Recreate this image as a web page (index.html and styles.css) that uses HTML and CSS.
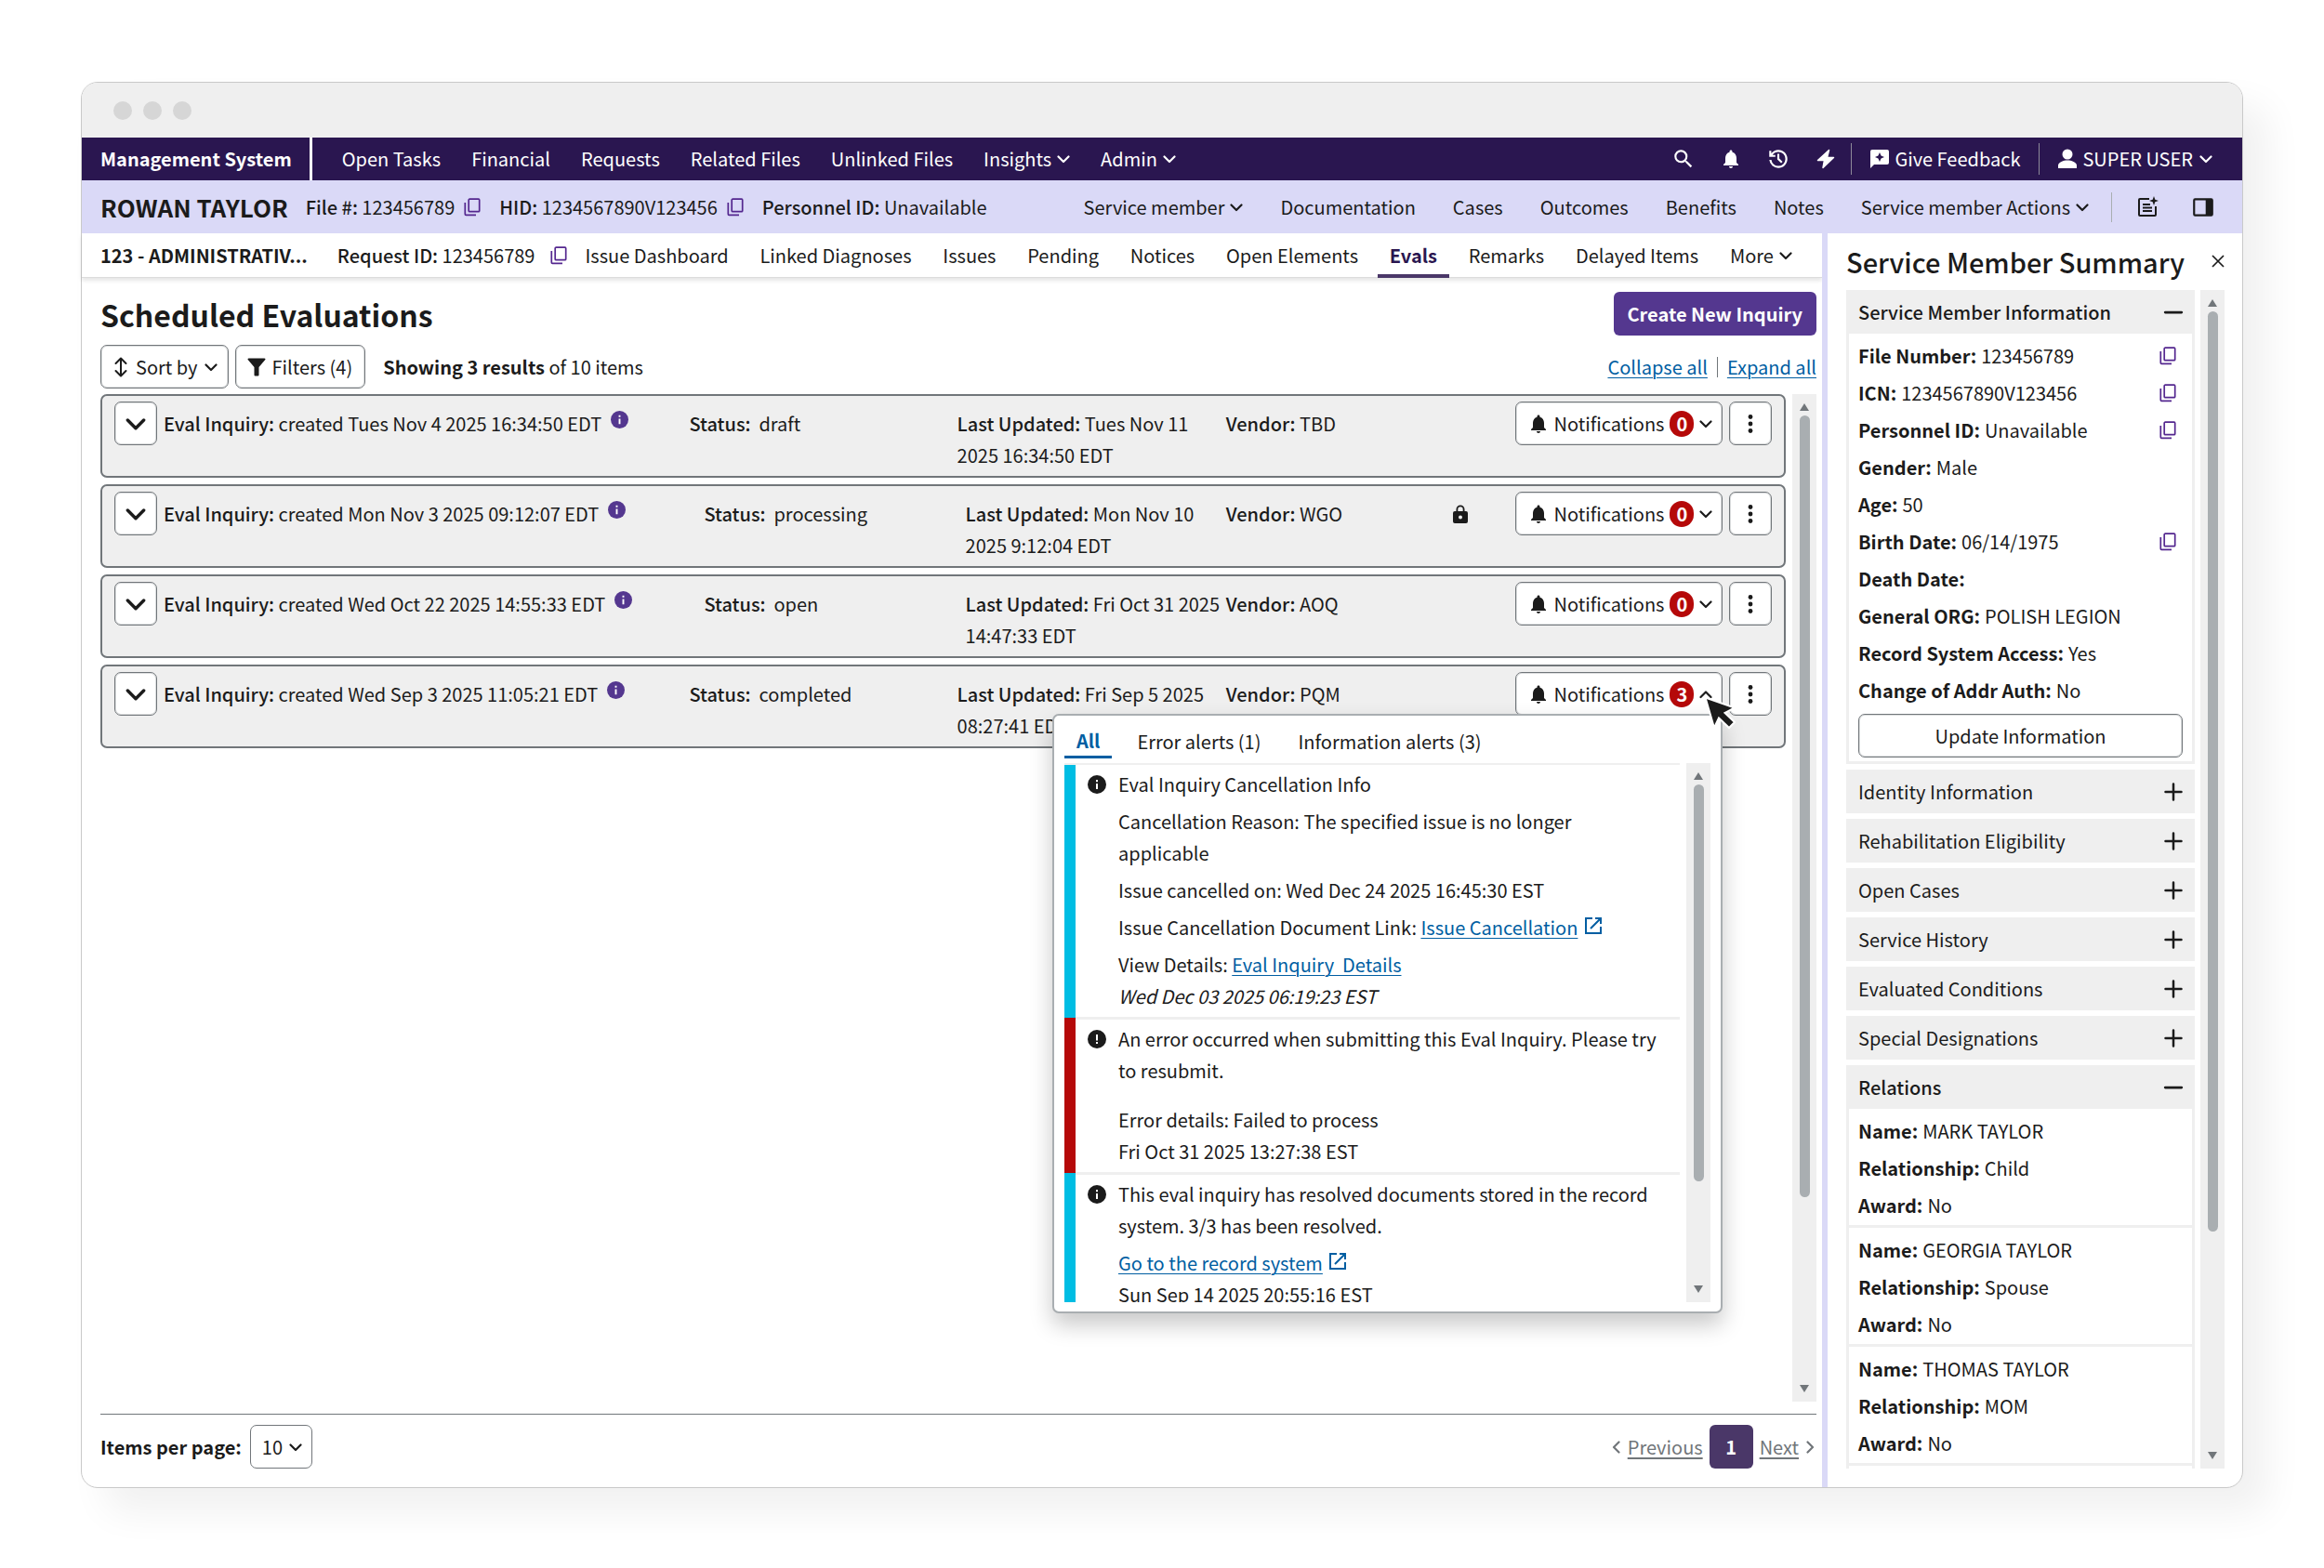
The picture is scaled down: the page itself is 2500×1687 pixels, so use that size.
FILE: index.html
```html
<!DOCTYPE html>
<html lang="en">
<head>
<meta charset="utf-8">
<title>Management System</title>
<link rel="stylesheet" href="styles.css">
</head>
<body>
<svg class="sprite" aria-hidden="true">
  <symbol id="chevron" viewBox="0 0 14 14"><path d="M1.500 4.500 7 10l5.500-5.500" fill="none" stroke="currentColor" stroke-width="2.200" stroke-linecap="round" stroke-linejoin="round"/></symbol>
  <symbol id="chevron-up" viewBox="0 0 14 14"><path d="M1.500 10 7 4.500l5.500 5.500" fill="none" stroke="currentColor" stroke-width="2.200" stroke-linecap="round" stroke-linejoin="round"/></symbol>
  <symbol id="search" viewBox="0 0 24 24"><path fill="currentColor" d="M15.500 14h-.79l-.28-.27A6.471 6.471 0 0 0 16 9.500 6.500 6.500 0 1 0 9.500 16c1.610 0 3.090-.59 4.230-1.570l.27.28v.79l5 4.990L20.490 19l-4.990-5zm-6 0C7.010 14 5 11.990 5 9.500S7.010 5 9.500 5 14 7.010 14 9.500 11.990 14 9.500 14z"/></symbol>
  <symbol id="bell" viewBox="0 0 24 24"><path fill="currentColor" d="M12 22c1.100 0 2-.9 2-2h-4c0 1.100.89 2 2 2zm6-6v-5c0-3.070-1.640-5.640-4.500-6.320V4c0-.83-.67-1.500-1.500-1.500s-1.500.67-1.500 1.500v.68C7.630 5.360 6 7.920 6 11v5l-2 2v1h16v-1l-2-2z"/></symbol>
  <symbol id="history" viewBox="0 -960 960 960"><path fill="currentColor" d="M480-120q-138 0-240.500-91.500T122-440h82q14 104 92.500 172T480-200q117 0 198.500-81.500T760-480q0-117-81.500-198.500T480-760q-69 0-129 32t-101 88h110v80H120v-240h80v94q51-64 124.500-99T480-840q75 0 140.500 28.500t114 77q48.500 48.500 77 114T840-480q0 75-28.500 140.500t-77 114q-48.500 48.500-114 77T480-120Zm112-192L440-464v-216h80v184l128 128-56 56Z"/></symbol>
  <symbol id="bolt" viewBox="0 0 24 24"><path fill="currentColor" stroke="currentColor" stroke-width="1.500" stroke-linejoin="round" d="M15.500 2.500 3.500 13.500h7L9 21.500 20.500 10.500H13.500z"/></symbol>
  <symbol id="feedback" viewBox="0 0 24 24"><path fill="currentColor" fill-rule="evenodd" d="M20 2H4a2 2 0 0 0-2 2v18l4-4h14a2 2 0 0 0 2-2V4a2 2 0 0 0-2-2zm-6.430 9.570L12 15l-1.570-3.430L7 10l3.430-1.570L12 5l1.570 3.430L17 10z"/></symbol>
  <symbol id="user" viewBox="0 0 24 24"><circle cx="12" cy="7" r="5.500" fill="currentColor"/><path fill="currentColor" d="M2 19c0-3.500 6-5.500 10-5.500s10 2 10 5.500v3H2z"/></symbol>
  <symbol id="copy" viewBox="0 0 20 20"><g fill="none" stroke="currentColor" stroke-width="1.700" stroke-linejoin="round"><rect x="6.200" y="1.200" width="11.500" height="13.500" rx="1"/><path d="M2.300 5v12.300a1 1 0 0 0 1 1H14"/></g></symbol>
  <symbol id="note" viewBox="0 0 24 24"><path fill="none" stroke="currentColor" stroke-width="2" stroke-linejoin="round" d="M14 3H4a1 1 0 0 0-1 1v16a1 1 0 0 0 1 1h16a1 1 0 0 0 1-1v-9"/><path fill="none" stroke="currentColor" stroke-width="1.800" d="M7 9h8M7 12.500h10M7 16h10"/><path fill="currentColor" d="m19 0 1.300 3.700L24 5l-3.700 1.300L19 10l-1.300-3.700L14 5l3.700-1.300z"/></symbol>
  <symbol id="panel" viewBox="0 0 24 24"><rect x="3" y="4" width="18" height="16" rx="1" fill="none" stroke="currentColor" stroke-width="2"/><path fill="currentColor" d="M14.500 4H21v16h-6.500z"/></symbol>
  <symbol id="sort" viewBox="0 0 24 24"><path fill="none" stroke="currentColor" stroke-width="2" stroke-linecap="round" stroke-linejoin="round" d="M12 3v18M6.500 8 12 2.500 17.500 8M6.500 16l5.500 5.500 5.500-5.500"/></symbol>
  <symbol id="funnel" viewBox="0 0 20 20"><path fill="currentColor" d="M1.500.5h17a1 1 0 0 1 .8 1.600L12.500 10v8.500a1 1 0 0 1-1 1h-3a1 1 0 0 1-1-1V10L.7 2.100A1 1 0 0 1 1.500.5z"/></symbol>
  <symbol id="info" viewBox="0 0 20 20"><circle cx="10" cy="10" r="10" fill="currentColor"/><path fill="#fff" d="M9 9h2v6H9zM9 5h2v2.200H9z"/></symbol>
  <symbol id="alert" viewBox="0 0 20 20"><circle cx="10" cy="10" r="10" fill="currentColor"/><path fill="#fff" d="M9 5h2v6.500H9zM9 13h2v2H9z"/></symbol>
  <symbol id="dots" viewBox="0 0 20 20"><g fill="currentColor"><circle cx="10" cy="2.500" r="2.400"/><circle cx="10" cy="10" r="2.400"/><circle cx="10" cy="17.500" r="2.400"/></g></symbol>
  <symbol id="lock" viewBox="0 0 16 20"><path fill="currentColor" fill-rule="evenodd" d="M2 7h1.500V5a4.500 4.500 0 0 1 9 0v2H14a2 2 0 0 1 2 2v9a2 2 0 0 1-2 2H2a2 2 0 0 1-2-2V9a2 2 0 0 1 2-2zm3.300 0h5.400V5a2.700 2.700 0 0 0-5.400 0zM8 11.500a2 2 0 1 0 0 4 2 2 0 0 0 0-4z"/></symbol>
  <symbol id="external" viewBox="0 0 20 20"><path fill="none" stroke="currentColor" stroke-width="2" d="M9 2H2v16h16v-7M12 2h6v6M18 2 7 13"/></symbol>
  <symbol id="close" viewBox="0 0 14 14"><path stroke="currentColor" stroke-width="1.700" d="m1 1 12 12M13 1 1 13"/></symbol>
  <symbol id="minus" viewBox="0 0 20 20"><path stroke="currentColor" stroke-width="2.500" stroke-linecap="round" d="M2 10h16"/></symbol>
  <symbol id="plus" viewBox="0 0 20 20"><path stroke="currentColor" stroke-width="2.500" stroke-linecap="round" d="M1.500 10h17M10 1.500v17"/></symbol>
  <symbol id="cursor" viewBox="0 0 34 36"><path fill="#1b1b1b" stroke="#fff" stroke-width="2" stroke-linejoin="miter" d="M1.500 1.500 33 12.500 22.500 18 33 28l-6 6L16 23.500 11 34z"/></symbol>
</svg>

<div class="window">
  <div class="titlebar"><span class="dot"></span><span class="dot"></span><span class="dot"></span></div>

  <header class="topbar">
    <strong class="brand">Management System</strong>
    <nav class="topnav">
      <a href="#">Open Tasks</a><a href="#">Financial</a><a href="#">Requests</a><a href="#">Related Files</a><a href="#">Unlinked Files</a>
      <a href="#">Insights<svg class="chev"><use href="#chevron"/></svg></a>
      <a href="#">Admin<svg class="chev"><use href="#chevron"/></svg></a>
    </nav>
    <div class="tools">
      <button class="bare" aria-label="Search"><svg class="i26"><use href="#search"/></svg></button>
      <button class="bare" aria-label="Alerts"><svg class="i24"><use href="#bell"/></svg></button>
      <button class="bare" aria-label="History"><svg class="i26"><use href="#history"/></svg></button>
      <button class="bare" aria-label="Quick actions"><svg class="i24"><use href="#bolt"/></svg></button>
    </div>
    <a class="feedback" href="#"><svg class="i24"><use href="#feedback"/></svg>Give Feedback</a>
    <a class="account" href="#"><svg class="i24"><use href="#user"/></svg>SUPER USER<svg class="chev"><use href="#chevron"/></svg></a>
  </header>

  <div class="memberbar">
    <h2 class="member">ROWAN TAYLOR</h2>
    <div class="ids">
      <span><b>File #:</b> 123456789</span><button class="bare copy" aria-label="Copy file number"><svg class="i20"><use href="#copy"/></svg></button>
      <span><b>HID:</b> 1234567890V123456</span><button class="bare copy" aria-label="Copy HID"><svg class="i20"><use href="#copy"/></svg></button>
      <span><b>Personnel ID:</b> Unavailable</span>
    </div>
    <nav class="membernav">
      <a href="#">Service member<svg class="chev"><use href="#chevron"/></svg></a><a href="#">Documentation</a><a href="#">Cases</a><a href="#">Outcomes</a><a href="#">Benefits</a><a href="#">Notes</a>
      <a href="#">Service member Actions<svg class="chev"><use href="#chevron"/></svg></a>
    </nav>
    <div class="membertools">
      <button class="bare" aria-label="Add note"><svg class="i24"><use href="#note"/></svg></button>
      <button class="bare" aria-label="Toggle panel"><svg class="i26"><use href="#panel"/></svg></button>
    </div>
  </div>

  <div class="body">
    <main class="main">
      <div class="tabs">
        <strong class="case">123 - ADMINISTRATIV...</strong>
        <span class="request"><span><b>Request ID:</b> 123456789</span><button class="bare copy" aria-label="Copy request ID"><svg class="i20"><use href="#copy"/></svg></button></span>
        <nav class="tabnav">
          <a href="#">Issue Dashboard</a><a href="#">Linked Diagnoses</a><a href="#">Issues</a><a href="#">Pending</a><a href="#">Notices</a><a href="#">Open Elements</a><a class="current" href="#">Evals</a><a href="#">Remarks</a><a href="#">Delayed Items</a><a href="#">More<svg class="chev"><use href="#chevron"/></svg></a>
        </nav>
      </div>

      <div class="content">
        <div class="heading">
          <h1>Scheduled Evaluations</h1>
          <button class="primary">Create New Inquiry</button>
        </div>
        <div class="filters">
          <button class="btn sort"><svg class="i24"><use href="#sort"/></svg>Sort by<svg class="chev"><use href="#chevron"/></svg></button>
          <button class="btn filter"><svg class="i20"><use href="#funnel"/></svg>Filters (4)</button>
          <p class="count"><strong>Showing 3 results</strong> of 10 items</p>
          <p class="toggles"><a href="#">Collapse all</a><span class="bar"></span><a href="#">Expand all</a></p>
        </div>

        <div class="listing">
          <div class="inquiries">
            <article class="inquiry">
              <button class="btn expand" aria-label="Expand"><svg class="i22"><use href="#chevron"/></svg></button>
              <div class="cols">
                <p><b>Eval Inquiry:</b> created Tues Nov 4 2025 16:34:50 EDT <svg class="info"><use href="#info"/></svg></p>
                <p><b>Status:</b>&nbsp; draft</p>
                <p><b>Last Updated:</b> Tues Nov 11 2025 16:34:50 EDT</p>
                <p><b>Vendor:</b> TBD</p>
              </div>
              <div class="actions">
                <button class="btn notify"><svg class="i24"><use href="#bell"/></svg>Notifications<span class="badge">0</span><svg class="chev"><use href="#chevron"/></svg></button>
                <button class="btn menu" aria-label="More actions"><svg class="i20"><use href="#dots"/></svg></button>
              </div>
            </article>
            <article class="inquiry">
              <button class="btn expand" aria-label="Expand"><svg class="i22"><use href="#chevron"/></svg></button>
              <div class="cols shifted">
                <p><b>Eval Inquiry:</b> created Mon Nov 3 2025 09:12:07 EDT <svg class="info"><use href="#info"/></svg></p>
                <p><b>Status:</b>&nbsp; processing</p>
                <p><b>Last Updated:</b> Mon Nov 10 2025 9:12:04 EDT</p>
                <p><b>Vendor:</b> WGO</p>
                <svg class="lock"><use href="#lock"/></svg>
              </div>
              <div class="actions">
                <button class="btn notify"><svg class="i24"><use href="#bell"/></svg>Notifications<span class="badge">0</span><svg class="chev"><use href="#chevron"/></svg></button>
                <button class="btn menu" aria-label="More actions"><svg class="i20"><use href="#dots"/></svg></button>
              </div>
            </article>
            <article class="inquiry">
              <button class="btn expand" aria-label="Expand"><svg class="i22"><use href="#chevron"/></svg></button>
              <div class="cols shifted">
                <p><b>Eval Inquiry:</b> created Wed Oct 22 2025 14:55:33 EDT <svg class="info"><use href="#info"/></svg></p>
                <p><b>Status:</b>&nbsp; open</p>
                <p><b>Last Updated:</b> Fri Oct 31 2025 14:47:33 EDT</p>
                <p><b>Vendor:</b> AOQ</p>
              </div>
              <div class="actions">
                <button class="btn notify"><svg class="i24"><use href="#bell"/></svg>Notifications<span class="badge">0</span><svg class="chev"><use href="#chevron"/></svg></button>
                <button class="btn menu" aria-label="More actions"><svg class="i20"><use href="#dots"/></svg></button>
              </div>
            </article>
            <article class="inquiry">
              <button class="btn expand" aria-label="Expand"><svg class="i22"><use href="#chevron"/></svg></button>
              <div class="cols">
                <p><b>Eval Inquiry:</b> created Wed Sep 3 2025 11:05:21 EDT <svg class="info"><use href="#info"/></svg></p>
                <p><b>Status:</b>&nbsp; completed</p>
                <p><b>Last Updated:</b> Fri Sep 5 2025 08:27:41 EDT</p>
                <p><b>Vendor:</b> PQM</p>
              </div>
              <div class="actions">
                <div class="anchor">
                  <button class="btn notify"><svg class="i24"><use href="#bell"/></svg>Notifications<span class="badge">3</span><svg class="chev"><use href="#chevron-up"/></svg></button>
                  <section class="popup">
                    <div class="poptabs">
                      <button class="poptab active">All</button><button class="poptab">Error alerts (1)</button><button class="poptab">Information alerts (3)</button>
                    </div>
                    <div class="popbody">
                      <ul class="alerts">
                        <li class="alert">
                          <svg class="i20"><use href="#info"/></svg>
                          <div class="text">
                            <p>Eval Inquiry Cancellation Info</p>
                            <p>Cancellation Reason: The specified issue is no longer applicable</p>
                            <p>Issue cancelled on: Wed Dec 24 2025 16:45:30 EST</p>
                            <p>Issue Cancellation Document Link: <a href="#">Issue Cancellation</a> <svg class="ext"><use href="#external"/></svg></p>
                            <p>View Details: <a href="#">Eval Inquiry&nbsp; Details</a><br><em>Wed Dec 03 2025 06:19:23 EST</em></p>
                          </div>
                        </li>
                        <li class="alert error">
                          <svg class="i20"><use href="#alert"/></svg>
                          <div class="text loose">
                            <p>An error occurred when submitting this Eval Inquiry. Please try to resubmit.</p>
                            <p>Error details: Failed to process<br>Fri Oct 31 2025 13:27:38 EST</p>
                          </div>
                        </li>
                        <li class="alert">
                          <svg class="i20"><use href="#info"/></svg>
                          <div class="text">
                            <p>This eval inquiry has resolved documents stored in the record system. 3/3 has been resolved.</p>
                            <p><a href="#">Go to the record system</a> <svg class="ext"><use href="#external"/></svg><br>Sun Sep 14 2025 20:55:16 EST</p>
                          </div>
                        </li>
                      </ul>
                      <div class="scroll"><span class="arrow up"></span><span class="track"><span class="thumb pop"></span></span><span class="arrow down"></span></div>
                    </div>
                  </section>
                  <svg class="cursor"><use href="#cursor"/></svg>
                </div>
                <button class="btn menu" aria-label="More actions"><svg class="i20"><use href="#dots"/></svg></button>
              </div>
            </article>
          </div>
          <div class="scroll"><span class="arrow up"></span><span class="track"><span class="thumb list"></span></span><span class="arrow down"></span></div>
        </div>

        <footer class="pager">
          <label class="perpage" for="size">Items per page:</label>
          <span class="picker"><select id="size"><option>10</option></select><svg class="chev"><use href="#chevron"/></svg></span>
          <nav class="pages">
            <a href="#"><svg class="chev left"><use href="#chevron"/></svg><span>Previous</span></a>
            <button class="page">1</button>
            <a href="#"><span>Next</span><svg class="chev right"><use href="#chevron"/></svg></a>
          </nav>
        </footer>
      </div>
    </main>

    <aside class="summary">
      <div class="sumhead"><h2>Service Member Summary</h2><button class="bare" aria-label="Close"><svg class="i14"><use href="#close"/></svg></button></div>
      <div class="sumbody">
        <div class="sections">
          <section>
            <button class="section open">Service Member Information<svg class="i22"><use href="#minus"/></svg></button>
            <div class="fields">
              <p><strong>File Number:</strong> 123456789<button class="bare copy" aria-label="Copy"><svg class="i20"><use href="#copy"/></svg></button></p>
              <p><strong>ICN:</strong> 1234567890V123456<button class="bare copy" aria-label="Copy"><svg class="i20"><use href="#copy"/></svg></button></p>
              <p><strong>Personnel ID:</strong> Unavailable<button class="bare copy" aria-label="Copy"><svg class="i20"><use href="#copy"/></svg></button></p>
              <p><strong>Gender:</strong> Male</p>
              <p><strong>Age:</strong> 50</p>
              <p><strong>Birth Date:</strong> 06/14/1975<button class="bare copy" aria-label="Copy"><svg class="i20"><use href="#copy"/></svg></button></p>
              <p><strong>Death Date:</strong></p>
              <p><strong>General ORG:</strong> POLISH LEGION</p>
              <p><strong>Record System Access:</strong> Yes</p>
              <p><strong>Change of Addr Auth:</strong> No</p>
              <button class="btn update">Update Information</button>
            </div>
          </section>
          <button class="section">Identity Information<svg class="i20"><use href="#plus"/></svg></button>
          <button class="section">Rehabilitation Eligibility<svg class="i20"><use href="#plus"/></svg></button>
          <button class="section">Open Cases<svg class="i20"><use href="#plus"/></svg></button>
          <button class="section">Service History<svg class="i20"><use href="#plus"/></svg></button>
          <button class="section">Evaluated Conditions<svg class="i20"><use href="#plus"/></svg></button>
          <button class="section">Special Designations<svg class="i20"><use href="#plus"/></svg></button>
          <section>
            <button class="section open">Relations<svg class="i22"><use href="#minus"/></svg></button>
            <div class="fields relation">
              <p><strong>Name:</strong> MARK TAYLOR</p><p><strong>Relationship:</strong> Child</p><p><strong>Award:</strong> No</p>
            </div>
            <div class="fields relation">
              <p><strong>Name:</strong> GEORGIA TAYLOR</p><p><strong>Relationship:</strong> Spouse</p><p><strong>Award:</strong> No</p>
            </div>
            <div class="fields relation">
              <p><strong>Name:</strong> THOMAS TAYLOR</p><p><strong>Relationship:</strong> MOM</p><p><strong>Award:</strong> No</p>
            </div>
            <div class="fields relation"></div>
          </section>
        </div>
        <div class="scroll"><span class="arrow up"></span><span class="track"><span class="thumb side"></span></span><span class="arrow down"></span></div>
      </div>
    </aside>
  </div>
</div>
</body>
</html>
```
FILE: styles.css
```css
* { box-sizing: border-box; }

body {
  margin: 0;
  padding: 88px 87px 86px;
  height: 100vh;
  background: #fff;
  color: #1b1b1b;
  font: 20px/34px "Noto Sans CJK SC", "Noto Sans", sans-serif;
}

h1, h2, p, ul { margin: 0; padding: 0; }
b { font-weight: 500; }
button, select { font: inherit; color: inherit; }
button { cursor: pointer; }
a { color: inherit; text-decoration: none; }
svg { flex: none; }

.sprite { position: absolute; width: 0; height: 0; }
.i14 { width: 14px; height: 14px; }
.i20 { width: 20px; height: 20px; }
.i22 { width: 22px; height: 22px; }
.i24 { width: 24px; height: 24px; }
.i26 { width: 26px; height: 26px; }
.chev { width: 14px; height: 14px; margin-left: 6px; }
.bare { display: flex; padding: 0; border: 0; background: none; }
.copy { color: #54278f; }

.window {
  display: flex;
  flex-direction: column;
  height: 100%;
  background: #fff;
  border: 1px solid #c9c9c9;
  border-radius: 18px;
  box-shadow: 26px 26px 40px rgba(0, 0, 0, .06);
}

.titlebar {
  display: flex;
  align-items: center;
  gap: 12px;
  height: 59px;
  padding-left: 34px;
  background: #efefef;
  border-radius: 17px 17px 0 0;
}
.dot { width: 20px; height: 20px; border-radius: 50%; background: #d6d6d6; }

.topbar {
  display: flex;
  align-items: center;
  height: 46px;
  background: #2a1650;
  color: #fff;
}
.brand {
  display: flex;
  align-items: center;
  height: 100%;
  padding: 0 19px 0 20px;
  border-right: 3px solid #fff;
}
.topnav { display: flex; flex: 1; gap: 33px; padding-left: 32px; }
.topnav a, .membernav a, .tabnav a { display: flex; align-items: center; white-space: nowrap; }
.tools { display: flex; align-items: center; gap: 26px; padding-right: 15px; }
.feedback, .account {
  display: flex;
  align-items: center;
  gap: 4px;
  padding: 0 20px 0 18px;
  border-left: 1px solid #8d8a99;
}
.account { padding-right: 32px; }
.account .chev { margin-left: 3px; }

.memberbar {
  display: flex;
  align-items: center;
  height: 57px;
  padding-left: 20px;
  background: #dad9f7;
}
.member { font-size: 26px; font-weight: 700; white-space: nowrap; }
.ids { display: flex; align-items: center; flex: 1; padding-left: 19px; white-space: nowrap; }
.ids .copy { margin: 0 19px 0 9px; }
.membernav { display: flex; gap: 40px; }
.membertools {
  display: flex;
  align-items: center;
  gap: 35px;
  height: 32px;
  margin-left: 24px;
  padding: 0 29px 0 26px;
  border-left: 1px solid #a9aeb1;
}

.body { display: flex; flex: 1; min-height: 0; }
.main { display: flex; flex: 1; flex-direction: column; min-width: 0; }

.tabs {
  display: flex;
  align-items: center;
  height: 48px;
  padding: 0 32px 0 20px;
  border-bottom: 1px solid #dcdcdc;
  box-shadow: 0 3px 4px rgba(0, 0, 0, .1);
}
.case { padding-right: 32px; white-space: nowrap; }
.request { display: flex; align-items: center; gap: 16px; padding-right: 18px; white-space: nowrap; }
.tabnav { display: flex; flex: 1; justify-content: space-between; height: 48px; }
.current {
  margin: 0 -13px;
  padding: 4px 13px 0;
  border-bottom: 4px solid #4a3768;
  color: #2a1650;
  font-weight: 700;
}

.content { display: flex; flex: 1; flex-direction: column; min-height: 0; padding: 15px 6px 20px 20px; }
.heading { display: flex; align-items: center; justify-content: space-between; }
h1 { font-size: 32px; font-weight: 700; line-height: 46px; }
.primary {
  height: 47px;
  padding: 0 15px;
  border: 0;
  border-radius: 6px;
  background: #54378f;
  color: #fff;
  font-weight: 700;
}

.btn {
  display: flex;
  align-items: center;
  justify-content: center;
  height: 47px;
  padding: 0;
  border: 1px solid #71767a;
  border-radius: 7px;
  background: #fff;
  box-shadow: 0 0 0 1px #71767a40 inset;
  white-space: nowrap;
}
.filters { display: flex; align-items: center; gap: 7px; margin-top: 10px; }
.sort { gap: 4px; padding: 0 11px 0 9px; }
.sort .chev { margin-left: 3px; }
.filter { gap: 7px; padding: 0 13px 0 12px; }
.count { flex: 1; padding-left: 12px; }
.toggles { display: flex; align-items: center; gap: 10px; }
.toggles .bar { width: 1px; height: 22px; background: #71767a; }
.toggles a, .alerts a { color: #005ea2; text-decoration: underline; text-underline-offset: 3px; text-decoration-thickness: 1px; }

.listing { display: flex; flex: 1; gap: 7px; min-height: 0; margin-top: 6px; }
.inquiries { display: flex; flex: 1; flex-direction: column; gap: 7px; min-width: 0; }
.inquiry {
  display: flex;
  padding: 6px 13px 5px;
  min-height: 90px;
  border: 2px solid #71767a;
  border-radius: 7px;
  background: #efefef;
}
.expand { width: 46px; }
.cols {
  display: grid;
  flex: 1;
  grid-template-columns: 565fr 288fr 289fr 240fr 71fr;
  padding: 7px 0 0 7px;
  min-width: 0;
}
.cols.shifted { grid-template-columns: 581fr 281fr 280fr 240fr 71fr; }
.cols p { min-width: 0; }
.info { width: 19px; height: 19px; margin-left: 5px; vertical-align: 3px; color: #54378f; }
.lock { width: 16px; height: 20px; margin: 7px 0 0 4px; }
.actions { display: flex; gap: 7px; }
.anchor { position: relative; }
.notify { width: 223px; padding-left: 2px; }
.notify .i24 { margin-right: 5px; }
.badge {
  width: 26px;
  height: 28px;
  margin-left: 6px;
  border-radius: 14px;
  background: #b50909;
  color: #fff;
  font-weight: 700;
  line-height: 27px;
}
.menu { width: 46px; }

.popup {
  position: absolute;
  top: 45px;
  right: 0;
  z-index: 1;
  width: 721px;
  padding: 10px 11px;
  border: 2px solid #a9aeb1;
  border-radius: 7px;
  background: #fff;
  box-shadow: 0 12px 24px rgba(0, 0, 0, .22);
}
.cursor { position: absolute; z-index: 2; left: 203px; top: 26px; width: 34px; height: 36px; }
.poptabs { display: flex; gap: 14px; }
.poptab { height: 36px; padding: 0 13px; border: 0; background: none; line-height: 34px; }
.poptab.active { border-bottom: 3px solid #005ea2; color: #005ea2; font-weight: 700; }
.popbody { display: flex; gap: 7px; height: 580px; margin-top: 5px; }
.alerts { flex: 1; overflow: hidden; border-top: 2px solid #efefef; list-style: none; }
.alert { display: flex; gap: 13px; padding: 4px 22px 0 0; }
.alert::before { content: ""; width: 12px; margin: -6px 0 -3px; background: #00bde3; }
.alert .i20 { margin-top: 7px; }
.alert + .alert { border-top: 3px solid #efefef; padding-top: 4px; }
.alert.error::before { background: #b50909; }
.text { display: flex; flex: 1; flex-direction: column; gap: 6px; padding-bottom: 5px; }
.text.loose { gap: 19px; }
.ext { width: 20px; height: 20px; margin-left: 2px; vertical-align: 0; color: #005ea2; }

.scroll { display: flex; flex-direction: column; align-items: center; width: 26px; padding: 10px 0; background: #efefef; }
.track { display: flex; flex: 1; flex-direction: column; padding: 5px 0; }
.thumb { width: 11px; border-radius: 6px; background: #a9aeb1; }
.thumb.list { height: 81%; }
.thumb.pop { height: 80%; }
.thumb.side { height: 81%; }
.arrow { width: 10px; height: 8px; background: #71767a; }
.arrow.up { clip-path: polygon(50% 0, 100% 100%, 0 100%); }
.arrow.down { clip-path: polygon(0 0, 100% 0, 50% 100%); }

.pager {
  display: flex;
  align-items: center;
  margin-top: 13px;
  padding-top: 11px;
  border-top: 1px solid #71767a;
}
.perpage { font-weight: 700; }
.picker { display: grid; align-items: center; margin-left: 9px; }
.picker > * { grid-area: 1 / 1; }
.picker .chev { justify-self: end; margin-right: 11px; pointer-events: none; }
.picker select {
  appearance: none;
  width: 67px;
  height: 47px;
  padding: 0 0 0 12px;
  border: 1px solid #71767a;
  border-radius: 7px;
  background: #fff;
}
.pages { display: flex; flex: 1; align-items: center; justify-content: flex-end; gap: 7px; color: #71767a; }
.pages a { display: flex; align-items: center; gap: 5px; }
.pages a span { text-decoration: underline; text-underline-offset: 3px; }
.pages .chev { margin: 0; }
.left { transform: rotate(90deg); }
.right { transform: rotate(-90deg); }
.page { width: 47px; height: 47px; padding: 0; border: 0; border-radius: 6px; background: #4a3768; color: #fff; font-weight: 700; }

.summary {
  display: flex;
  flex-direction: column;
  width: 452px;
  padding: 10px 19px 20px 20px;
  border-left: 6px solid #dad9f7;
}
.sumhead { display: flex; align-items: center; justify-content: space-between; }
.sumhead h2 { font-size: 29px; font-weight: 500; line-height: 40px; }
.sumbody { display: flex; flex: 1; gap: 6px; min-height: 0; margin-top: 11px; }
.sections { display: flex; flex: 1; flex-direction: column; gap: 6px; overflow: hidden; }
.section {
  display: flex;
  flex: none;
  align-items: center;
  justify-content: space-between;
  width: 100%;
  height: 47px;
  padding: 0 13px;
  border: 0;
  background: #efefef;
}
.open { font-weight: 500; padding-right: 12px; }
.fields {
  display: flex;
  flex-direction: column;
  gap: 6px;
  padding: 7px 10px 4px;
  border: solid #efefef;
  border-width: 0 3px 3px;
}
.fields p { display: flex; align-items: center; gap: 5px; }
.fields .copy { margin-left: auto; padding-right: 6px; }
.relation { padding-bottom: 4px; min-height: 34px; }
.update { width: 100%; margin-top: 2px; }
```
